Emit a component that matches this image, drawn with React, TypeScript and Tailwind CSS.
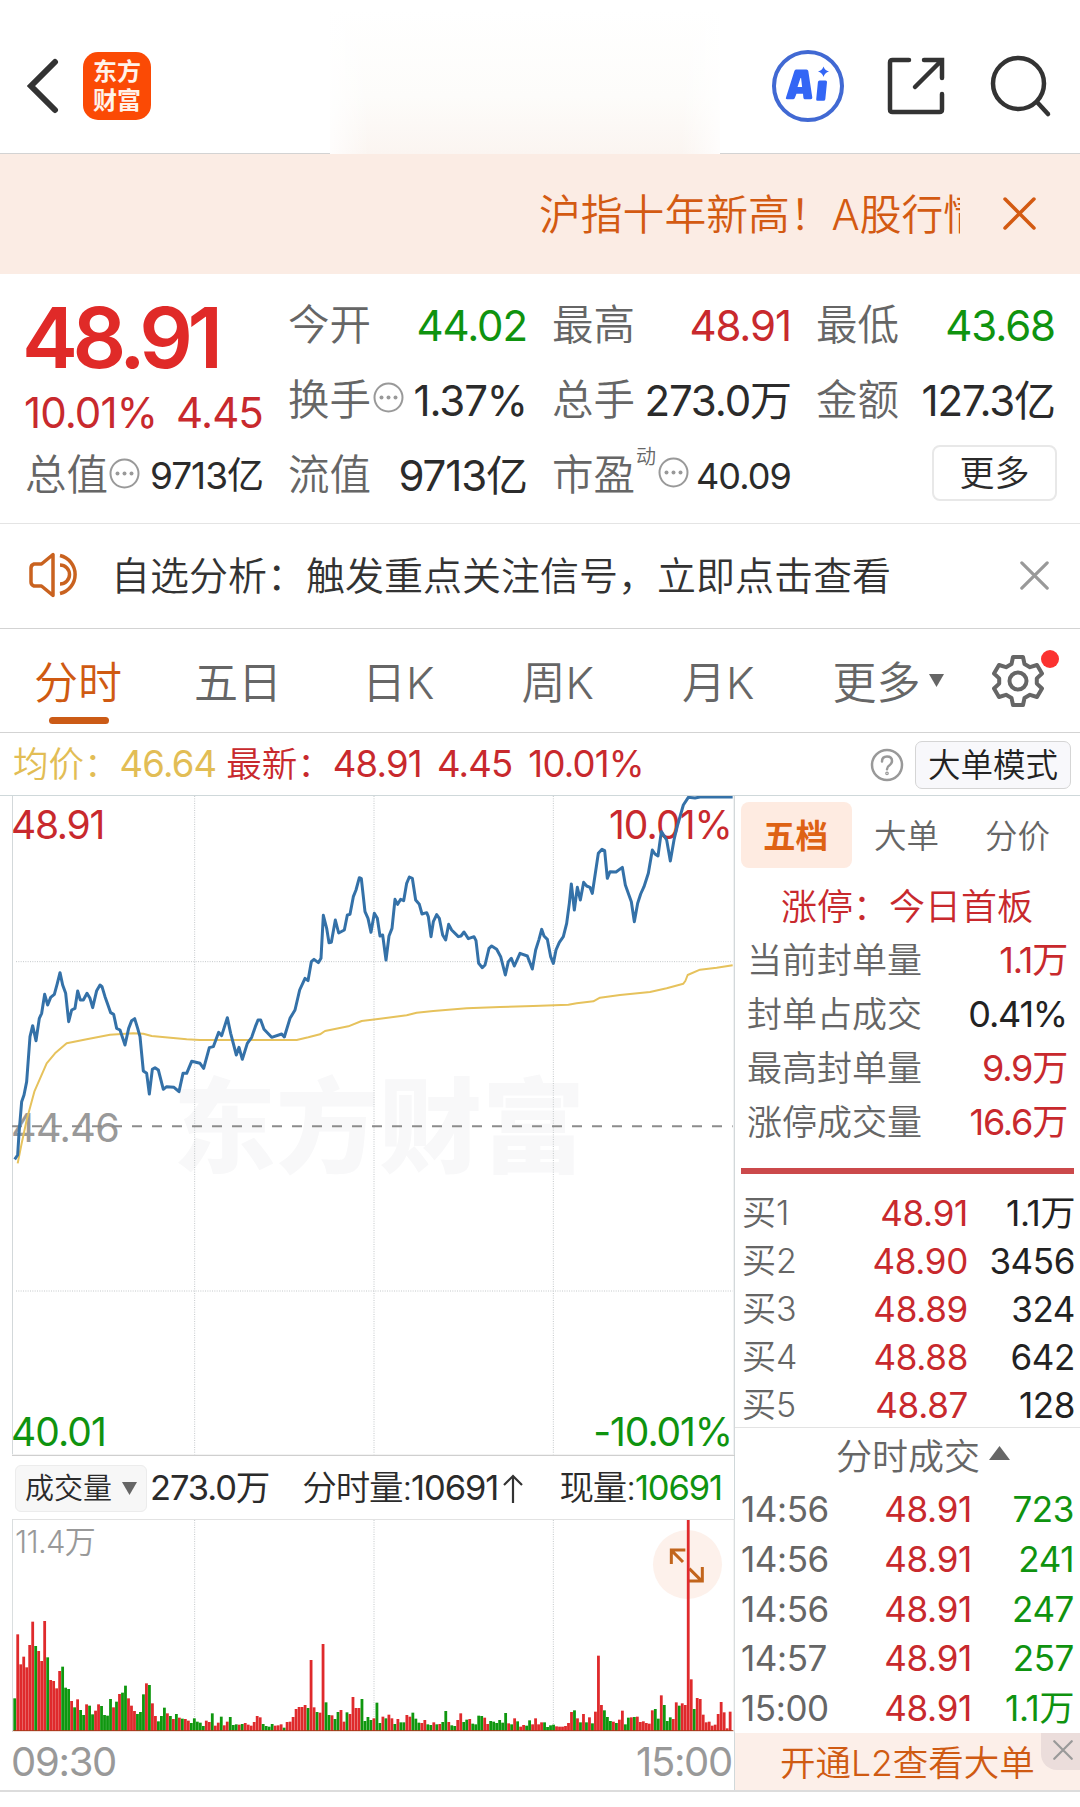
import type { ReactNode } from 'react';
import { clsx } from 'clsx';

interface OrderRow {
  label: string;
  price: string;
  amount: string;
}

const RED = 'text-[#c8292d]';
const GREEN = 'text-[#0f930f]';

const tabs = [
  { name: '五日', className: 'ml-[72px]' },
  { name: '日K', className: 'ml-[80px]' },
  { name: '周K', className: 'ml-[87px]' },
  { name: '月K', className: 'ml-[88px]' },
];

const limitStats = [
  { label: '当前封单量', value: '1.1万', color: RED },
  { label: '封单占成交', value: '0.41%', color: 'text-[#222]' },
  { label: '最高封单量', value: '9.9万', color: RED },
  { label: '涨停成交量', value: '16.6万', color: RED },
];

const bids: OrderRow[] = [
  { label: '买1', price: '48.91', amount: '1.1万' },
  { label: '买2', price: '48.90', amount: '3456' },
  { label: '买3', price: '48.89', amount: '324' },
  { label: '买4', price: '48.88', amount: '642' },
  { label: '买5', price: '48.87', amount: '128' },
];

const trades: OrderRow[] = [
  { label: '14:56', price: '48.91', amount: '723' },
  { label: '14:56', price: '48.91', amount: '241' },
  { label: '14:56', price: '48.91', amount: '247' },
  { label: '14:57', price: '48.91', amount: '257' },
  { label: '15:00', price: '48.91', amount: '1.1万' },
];

const pricePoints =
  '44,1138 53,1125 57,1060 65,965 72,945 80,905 90,770 98,737 108,782 118,715 125,700 134,643 143,675 152,652 163,643 172,610 180,578 188,615 197,640 206,725 215,690 225,685 233,633 241,660 250,660 261,640 270,655 278,683 290,632 300,615 306,620 315,650 322,670 332,698 341,703 350,745 360,750 375,795 386,745 395,722 404,716 413,745 420,770 430,873 440,880 448,942 457,868 465,863 475,870 490,928 500,920 522,922 537,935 549,880 560,880 575,844 600,850 611,865 628,803 640,800 656,757 665,767 682,713 692,760 709,825 717,802 727,838 742,790 755,772 766,740 774,720 782,720 792,748 815,772 845,762 853,771 870,715 885,690 899,630 915,595 924,602 934,545 942,538 955,548 963,535 970,406 980,445 987,488 994,487 1006,420 1016,459 1033,450 1042,405 1050,403 1060,350 1068,330 1078,293 1084,296 1095,395 1104,415 1113,457 1123,400 1132,415 1140,468 1148,465 1158,540 1167,468 1176,445 1185,358 1193,373 1202,358 1211,362 1220,310 1228,291 1237,295 1247,360 1258,373 1266,402 1280,398 1285,410 1293,470 1300,425 1310,404 1318,415 1328,465 1337,480 1346,433 1355,450 1375,470 1383,468 1392,456 1405,476 1422,470 1428,482 1436,550 1447,563 1455,555 1467,505 1475,498 1490,508 1502,530 1516,585 1525,545 1534,535 1543,558 1560,520 1582,528 1597,567 1607,510 1617,478 1625,448 1632,468 1642,478 1652,530 1660,550 1668,510 1678,487 1690,470 1700,430 1708,370 1714,312 1723,390 1732,322 1741,360 1751,307 1760,318 1770,322 1777,340 1786,280 1795,220 1806,208 1814,212 1822,295 1830,275 1848,276 1867,262 1876,315 1894,365 1903,425 1913,370 1922,342 1932,320 1945,280 1957,210 1965,222 1974,228 1984,155 2000,180 2011,243 2022,180 2030,145 2050,75 2065,52 2085,54 2100,51 2198,51';

const averagePoints =
  '53,1150 65,1090 80,1020 103,935 140,850 165,820 200,790 260,778 330,764 400,760 430,761 455,768 560,778 600,780 890,780 925,772 960,763 975,753 1045,739 1085,723 1140,716 1220,706 1250,698 1300,693 1400,685 1500,681 1600,678 1705,674 1730,670 1780,664 1800,653 1860,645 1950,636 2000,625 2050,611 2056,603 2063,585 2100,569 2150,563 2198,556';

// one bar per minute, negative means the price went down
const volumes = [
  -98, 290, 200, 223, 191, 258, 328, -255, 240, 210, 330, -221, 153, 150, 128, 180, -193, -130, -126, 90,
  -71, 95, -63, -48, 80, -76, -50, 61, 80, -75, -48, -46, -96, 71, -88, 111, -115, -136, 98, 76,
  60, -51, -57, -110, 143, -138, 83, 45, -29, -45, -70, 53, -45, 36, -51, 40, -37, 36, 31, -24,
  -38, -28, -25, -15, 31, 27, -53, 16, 25, -43, 17, 28, -42, -18, -20, 19, -21, 24, 19, 16,
  27, 45, 41, -21, -15, -13, -21, 16, 17, 20, -10, 27, 28, 42, 66, 72, 72, 78, -69, 213,
  71, -57, 55, 261, -86, -48, 47, -36, -57, 63, 28, -56, 51, 102, 69, 69, -96, -30, -42, -33,
  38, -85, -24, 43, -38, 49, 38, -21, 36, -26, -26, 48, 43, -55, -37, -25, 24, 33, -20, -18,
  26, -20, 21, -27, -60, 27, -17, -15, 33, 53, -27, -34, 36, -22, -20, -46, -45, 40, 21, -30,
  -28, -24, -33, -25, -54, 23, -20, 38, -29, 13, 18, -16, -32, 20, 38, 20, 26, -26, -12, -17,
  -19, 14, 13, 13, 15, 24, 57, -62, 38, -26, 51, -26, 41, -23, 58, 226, 78, -62, -42, -30,
  28, -24, 34, 61, -20, -40, 41, -42, 43, 27, 29, 24, 22, 62, -66, -37, 107, -78, -30, -41,
  36, 86, -76, 83, 78, 633, 155, -66, 99, 96, 49, 26, 28, 16, 19, 51, 87, 56, 8, 58,
];

function Header() {
  return (
    <header className="flex h-[154px] shrink-0 items-center border-b border-[#d3d3d3] pt-[19px]">
      <svg className="ml-[27px] h-[56px] w-[32px]" viewBox="0 0 32 56" fill="none" stroke="#333" strokeWidth="6" strokeLinecap="round">
        <path d="M28 4 4 28l24 24" strokeLinejoin="miter" />
      </svg>
      <div className="ml-[24px] flex h-[68px] w-[68px] flex-col items-center justify-center rounded-[15px] bg-[#fb4a05] text-[24px] leading-[29px] font-bold text-[#fff3ea]">
        <span>东方</span>
        <span>财富</span>
      </div>
      <div className="-mt-[9px] ml-[179px] h-[144px] w-[390px] self-start bg-[linear-gradient(to_right,#ffffffcc,#ffffff00_10%,#ffffff00_90%,#ffffffcc),linear-gradient(to_bottom,#ffffff,#fdfcfa_60%,#fbf5f1)]" />
      <svg className="ml-[51px] h-[74px] w-[74px]" viewBox="0 0 74 74">
        <circle cx="37" cy="37" r="34" fill="none" stroke="#4169d3" strokeWidth="4" />
        <path
          d="M25 20.500h10.500q1.500 0 1.800 1.500l4 26.500q.2 1.700-1.500 1.700h-5.800q-1.400 0-1.600-1.500l-.4-4h-6.500l-1.700 4.300q-.5 1.200-1.800 1.200h-6q-1.800 0-1-1.700l8.300-26.300q.5-1.700 1.700-1.700Zm4.500 8.500-3 9h4.600l-1-9Z"
          fill="#3366f5"
          fillRule="evenodd"
        />
        <path d="M48.500 31.500h6q1.700 0 1.500 1.700l-1.700 17q-.2 1.600-1.800 1.600h-6q-1.500 0-1.300-1.600l1.700-17q.2-1.700 1.600-1.700ZM52.500 17.500q1.200 4 5.500 5-4.300 1.200-5.500 5.500-1.200-4.300-5.500-5.500 4.300-1 5.500-5Z" fill="#3366f5" />
      </svg>
      <svg className="ml-[41px] h-[60px] w-[60px]" viewBox="0 0 60 60" fill="none" stroke="#333" strokeWidth="4.500" strokeLinecap="round">
        <path d="M23 4H6.500Q4 4 4 6.500v47Q4 56 6.500 56h47q2.500 0 2.500-2.500V38M38 4h18v18M55 5 29 31" />
      </svg>
      <svg className="ml-[43px] h-[64px] w-[64px]" viewBox="0 0 64 64" fill="none" stroke="#333" strokeWidth="4.500" strokeLinecap="round">
        <circle cx="29.500" cy="29.500" r="25.500" />
        <path d="m48 48 11 12" />
      </svg>
    </header>
  );
}

function Close({ className, width = 3.5 }: { className: string; width?: number }) {
  return (
    <svg className={className} viewBox="0 0 32 32" fill="none" stroke="currentColor" strokeWidth={width} strokeLinecap="round">
      <path d="m2 2 28 28M30 2 2 30" />
    </svg>
  );
}

function Dots({ className }: { className: string }) {
  return (
    <svg className={clsx('h-[31px] w-[31px] shrink-0 text-[#999]', className)} viewBox="0 0 31 31">
      <circle cx="15.500" cy="15.500" r="14" fill="none" stroke="currentColor" strokeWidth="2" />
      <circle cx="8.500" cy="15.500" r="2" fill="currentColor" />
      <circle cx="15.500" cy="15.500" r="2" fill="currentColor" />
      <circle cx="22.500" cy="15.500" r="2" fill="currentColor" />
    </svg>
  );
}

function Cell({ label, value, color = 'text-[#2b2b2b]', children }: { label: string; value: string; color?: string; children?: ReactNode }) {
  return (
    <div className="flex h-[75px] w-[239px] items-center">
      <span className="text-[41.500px] text-[#666]">{label}</span>
      {children}
      <span className={clsx('ml-auto text-[42px] font-normal tracking-[-1.100px]', color)}>{value}</span>
    </div>
  );
}

function Quote() {
  return (
    <section className="flex h-[250px] shrink-0 gap-[25px] border-b border-[#e4e4e4] pt-[14px] pl-[25px]">
      <div className="flex w-[238px] flex-col">
        <div className="-ml-[3px] flex h-[99px] items-center text-[84px] font-semibold tracking-[-5.500px] text-[#e02a28]">48.91</div>
        <div className={clsx('-ml-px flex h-[51px] items-center justify-between text-[42px] font-normal tracking-[-0.900px]', RED)}>
          <span>10.01%</span>
          <span>4.45</span>
        </div>
        <div className="flex h-[75px] items-center">
          <span className="text-[41.500px] text-[#666]">总值</span>
          <Dots className="mb-[4px] ml-px" />
          <span className="ml-auto text-[37px] font-normal tracking-[-1px] text-[#2b2b2b]">9713亿</span>
        </div>
      </div>
      <div className="flex flex-col">
        <Cell label="今开" value="44.02" color={GREEN} />
        <Cell label="换手" value="1.37%">
          <Dots className="mb-[7px] ml-[2px]" />
        </Cell>
        <Cell label="流值" value="9713亿" />
      </div>
      <div className="flex flex-col">
        <Cell label="最高" value="48.91" color={RED} />
        <Cell label="总手" value="273.0万" />
        <div className="flex h-[75px] items-center">
          <span className="text-[41.500px] text-[#666]">市盈</span>
          <span className="mb-[38px] ml-px text-[20px] text-[#666]">动</span>
          <Dots className="mb-[6px] ml-[2px]" />
          <span className="ml-auto text-[36px] font-normal tracking-[-0.900px] text-[#2b2b2b]">40.09</span>
        </div>
      </div>
      <div className="flex flex-col">
        <Cell label="最低" value="43.68" color={GREEN} />
        <Cell label="金额" value="127.3亿" />
        <button className="mt-[7px] -mr-[2px] flex h-[56px] w-[125px] items-center justify-center self-end rounded-[8px] border-2 border-[#e8e8e8] text-[35px] text-[#2b2b2b]">
          更多
        </button>
      </div>
    </section>
  );
}

function Notice() {
  return (
    <section className="flex h-[105px] shrink-0 items-center border-b border-[#d3d3d3] pb-[2px] text-[#333]">
      <svg className="ml-[28px] h-[46px] w-[54px]" viewBox="0 0 54 46" fill="none" stroke="#c9621f" strokeWidth="3.500" strokeLinejoin="round">
        <path d="M25 2.500v41L13.500 34H6q-3-1-3-4V16q0-3 3-4h7.500Z" />
        <path d="M32 3.500a19.500 19.500 0 0 1 0 38M32 13a9.500 9.500 0 0 1 0 19" />
      </svg>
      <span className="ml-[29px] text-[39px]">自选分析：触发重点关注信号，立即点击查看</span>
      <Close className="mr-[31px] ml-auto h-[29px] w-[29px] text-[#999]" />
    </section>
  );
}

function Gear() {
  return (
    <div className="relative mb-[4px] ml-[47px] h-[54px] w-[54px]">
      <svg className="h-[54px] w-[54px]" viewBox="0 0 54 54" fill="none" stroke="#666" strokeWidth="4" strokeLinejoin="round">
        <path d="M22 3h10l1.500 7 5.500 3.200 7-2.200 5 8.500-5.200 4.900v5.200l5.200 4.900-5 8.500-7-2.200-5.500 3.200L32 51H22l-1.500-7-5.500-3.200-7 2.200-5-8.500 5.200-4.900v-5.200L3 19.500 8 11l7 2.200 5.500-3.200Z" />
        <circle cx="27" cy="27" r="8.500" />
      </svg>
      <span className="absolute -top-[4px] left-[50px] h-[18px] w-[18px] rounded-full bg-[#fb3230]" />
    </div>
  );
}

function Tabs() {
  return (
    <nav className="flex h-[104px] shrink-0 items-center border-b border-[#d3d3d3] pt-[4px] pl-[34px] text-[44px] text-[#666]">
      <div className="relative text-[#cf5a12]">
        分时
        <span className="absolute -bottom-[19px] left-[15px] h-[7px] w-[60px] rounded-full bg-[#cb5b16]" />
      </div>
      {tabs.map((tab) => (
        <div key={tab.name} className={tab.className}>
          {tab.name}
        </div>
      ))}
      <div className="ml-[78px] flex items-center gap-[9px]">
        更多
        <svg className="mb-[4px] h-[13px] w-[15px]" viewBox="0 0 15 13" fill="currentColor">
          <path d="M0 0h15L7.500 13Z" />
        </svg>
      </div>
      <Gear />
    </nav>
  );
}

function InfoBar() {
  return (
    <div className="flex h-[63px] shrink-0 items-center border-b border-[#cfd8da] pt-px text-[36.500px] tracking-[-0.800px]">
      <span className="ml-[13px] text-[35.500px] tracking-normal text-[#e2bd55]">均价：</span>
      <span className="font-normal text-[#e2bd55]">46.64</span>
      <span className={clsx('ml-[10px] text-[35.500px] tracking-normal', RED)}>最新：</span>
      <span className={clsx('font-normal', RED)}>48.91</span>
      <span className={clsx('ml-[15px] font-normal', RED)}>4.45</span>
      <span className={clsx('ml-[16px] font-normal', RED)}>10.01%</span>
      <svg className="ml-auto h-[34px] w-[34px]" viewBox="0 0 34 34" fill="none" stroke="#999" strokeWidth="2.500" strokeLinecap="round">
        <circle cx="17" cy="17" r="15" />
        <path d="M12 13.500q0-5 5-5t5 4.500q0 2.500-2.500 4.200-2.500 1.600-2.500 4" />
        <circle cx="17" cy="25.300" r=".6" />
      </svg>
      <button className="mr-[9px] ml-[11px] flex h-[48px] w-[156px] items-center justify-center rounded-[7px] border border-[#d5d5d5] bg-[#f8f8fb] pt-[3px] text-[32.500px] tracking-normal text-[#222]">
        大单模式
      </button>
    </div>
  );
}

function PriceChart() {
  return (
    <div className="relative ml-[12px] h-[660px] w-[723px]">
      <div className="absolute top-[280px] left-[161px] text-[103px] font-black text-[#f8f8f9]">东方财富</div>
      <span className={clsx('absolute top-[9px] -left-px text-[39px] font-normal tracking-[-1.300px]', RED)}>48.91</span>
      <span className={clsx('absolute top-[9px] right-[3px] text-[39px] font-normal tracking-[-0.900px]', RED)}>10.01%</span>
      <span className="absolute top-[313px] -left-px text-[39.500px] font-normal tracking-[-0.600px] text-[#999]">44.46</span>
      <span className={clsx('absolute top-[616px] -left-px text-[39px] font-normal tracking-[-0.900px]', GREEN)}>40.01</span>
      <span className={clsx('absolute top-[616px] right-[3px] text-[39px] font-normal tracking-[-1.100px]', GREEN)}>-10.01%</span>
      <svg className="absolute inset-0 h-[660px] w-[723px]" viewBox="36 48 2169 1980" fill="none">
        <path d="M37 48v1975M2203 48v1975" stroke="#d3d8da" strokeWidth="4" />
        <path d="M36 2027h2169" stroke="#cfcfcf" strokeWidth="6" />
        <path d="M584 48v1975M1122 48v1975M1660 48v1975M48 545h2150M48 1533h2150" stroke="#c4c8ca" strokeWidth="3" strokeDasharray="3 4" />
        <path d="M36 1039h2162" stroke="#8c8c8c" strokeWidth="6" strokeDasharray="30 30" />
        <polyline points={averagePoints} stroke="#e6c25c" strokeWidth="6" strokeLinejoin="round" />
        <polyline points={pricePoints} stroke="#3471a8" strokeWidth="9" strokeLinejoin="round" />
      </svg>
    </div>
  );
}

function VolumeChart() {
  return (
    <div className="relative ml-[12px] h-[213px] w-[723px]">
      <span className="absolute top-[7px] left-[3px] text-[31px] tracking-[-0.700px] text-[#999]">11.4万</span>
      <span className="absolute top-[11px] right-[13px] h-[69px] w-[69px] rounded-full bg-[#fdf1eb]" />
      <svg className="absolute inset-0 h-[213px] w-[723px]" viewBox="36 297 2169 639" fill="none">
        <path d="M36 298h2169" stroke="#dcdcdc" strokeWidth="3" />
        <path d="M37 297v639M2203 297v639" stroke="#dadedf" strokeWidth="4" />
        <path d="M584 300v633M1122 300v633M1660 300v633" stroke="#c4c8ca" strokeWidth="3" strokeDasharray="3 4" />
        <path d="M2049 426l-34-34M2014 432v-42h42M2068 446l36 36M2107 441v42h-42" stroke="#c2651c" strokeWidth="9" />
        {volumes.map((v, i) => (
          <rect
            key={i}
            x={40 + i * 8.98}
            y={933 - Math.abs(v)}
            width="8.4"
            height={Math.abs(v)}
            fill={v > 0 ? '#df2a2c' : '#0f970f'}
          />
        ))}
        <path d="M40 932h2160" stroke="#a83a1c" strokeWidth="3" />
      </svg>
    </div>
  );
}

function VolumeBar() {
  return (
    <div className="flex h-[63px] items-center pt-px text-[34.500px] tracking-[-1.100px] text-[#2b2b2b]">
      <button className="ml-[15px] flex h-[47px] w-[132px] items-center justify-center gap-[10px] rounded-[6px] border border-[#ececec] bg-[#f7f7f7] text-[29px] tracking-normal">
        成交量
        <svg className="h-[13px] w-[15px] text-[#666]" viewBox="0 0 15 13" fill="currentColor">
          <path d="M0 0h15L7.500 13Z" />
        </svg>
      </button>
      <span className="ml-[3px] font-normal">273.0万</span>
      <span className="ml-[33px]">分时量:</span>
      <span className="font-normal">10691</span>
      <svg className="ml-[5px] h-[30px] w-[20px]" viewBox="0 0 20 30" fill="none" stroke="#333" strokeWidth="2.200">
        <path d="M10 30V3M1 12l9-9 9 9" />
      </svg>
      <span className="ml-auto">现量:</span>
      <span className={clsx('mr-[12px] font-normal', GREEN)}>10691</span>
    </div>
  );
}

interface OrderLineProps {
  row: OrderRow;
  rowClass: string;
  labelClass: string;
  priceClass: string;
  amountClass: string;
}

function OrderLine({ row, rowClass, labelClass, priceClass, amountClass }: OrderLineProps) {
  return (
    <div className={clsx('flex items-center text-[35px]', rowClass)}>
      <span className={clsx('w-[100px] text-[#666]', labelClass)}>{row.label}</span>
      <span className={clsx('text-right font-normal tracking-[-0.300px]', RED, priceClass)}>{row.price}</span>
      <span className={clsx('flex-1 text-right font-normal tracking-[-0.400px]', amountClass)}>{row.amount}</span>
    </div>
  );
}

function SidePanel() {
  return (
    <aside className="flex w-[345px] flex-col">
      <div className="mt-[6px] flex h-[66px] items-center text-[32.500px] text-[#666]">
        <div className="ml-[6px] flex h-[66px] w-[111px] items-center justify-center rounded-[8px] bg-[#feebe1] pt-[5px] pr-[2px] font-bold text-[#de6214]">五档</div>
        <div className="mt-[5px] ml-[22px]">大单</div>
        <div className="mt-[5px] ml-[46px]">分价</div>
      </div>
      <div className={clsx('mt-[12px] flex h-[54px] items-center pl-[46px] text-[36px]', RED)}>涨停：今日首板</div>
      {limitStats.map((stat) => (
        <div key={stat.label} className="flex h-[54px] items-center justify-between pr-[13px] pb-[2px] pl-[12px]">
          <span className="text-[35px] text-[#666]">{stat.label}</span>
          <span className={clsx('text-[36px] font-normal tracking-[-1.200px]', stat.color)}>{stat.value}</span>
        </div>
      ))}
      <div className="mt-[18px] mr-[6px] mb-[15px] ml-[6px] h-[6px] bg-[#cb494b]" />
      {bids.map((row) => (
        <OrderLine
          key={row.label}
          row={row}
          rowClass="h-[48px] pr-[5px] pl-[7px]"
          labelClass="text-[34px]"
          priceClass="w-[126px]"
          amountClass="text-[#222]"
        />
      ))}
      <div className="-mt-[2px] flex h-[58px] items-center border-t border-[#e3e3e3] pl-[101px] text-[36px] text-[#666]">
        分时成交
        <svg className="mb-[8px] ml-[9px] h-[14px] w-[21px]" viewBox="0 0 21 14" fill="currentColor">
          <path d="M0 14h21L10.500 0Z" />
        </svg>
      </div>
      {trades.map((row, i) => (
        <OrderLine
          key={i}
          row={row}
          rowClass="h-[49.700px] pr-[6px] pl-[6px]"
          labelClass="font-normal tracking-[-0.400px]"
          priceClass="w-[131px]"
          amountClass={GREEN}
        />
      ))}
      <div className="relative flex flex-1 items-center bg-[#fcefe9] pt-[4px] pl-[45px] text-[35.500px] text-[#cf5a12]">
        开通L2查看大单
        <span className="absolute top-0 right-0 flex h-[37px] w-[39px] items-center justify-center rounded-bl-[16px] bg-[#ebdddb] pb-[3px] pl-[5px]">
          <Close className="h-[20px] w-[20px] text-[#999]" />
        </span>
      </div>
    </aside>
  );
}

export default function App() {
  return (
    <div className="flex h-[1807px] w-[1080px] flex-col overflow-hidden bg-white font-['Inter','Noto_Sans_CJK_SC',sans-serif] leading-none font-[350] whitespace-nowrap">
      <Header />
      <div className="flex h-[120px] shrink-0 items-center bg-[#fbece4] text-[#d35a12]">
        <div className="mt-[4px] ml-[539px] flex h-[60px] w-[421px] items-center overflow-hidden text-[41.800px]">沪指十年新高！A股行情</div>
        <Close className="mb-px ml-[43px] h-[33px] w-[33px]" />
      </div>
      <Quote />
      <Notice />
      <Tabs />
      <InfoBar />
      <main className="flex h-[996px] shrink-0 border-b-2 border-[#dcdcdc]">
        <div className="flex w-[735px] flex-col border-r border-[#d0d8da]">
          <PriceChart />
          <VolumeBar />
          <VolumeChart />
          <div className="flex h-[58px] items-center justify-between pt-[2px] pr-[2px] pl-[11px] text-[40px] font-normal tracking-[-1.300px] text-[#999]">
            <span>09:30</span>
            <span>15:00</span>
          </div>
        </div>
        <SidePanel />
      </main>
    </div>
  );
}
